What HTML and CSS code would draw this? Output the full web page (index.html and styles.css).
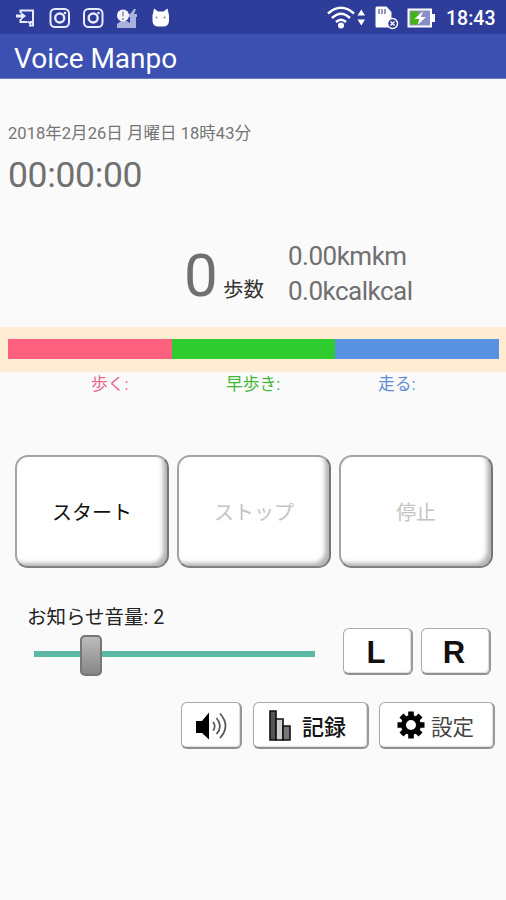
FILE: index.html
```html
<!DOCTYPE html>
<html lang="ja">
<head>
<meta charset="utf-8">
<title>Voice Manpo</title>
<link rel="stylesheet" href="styles.css">
</head>
<body>
<div class="screen">
  <header class="status">
    <svg class="status-left" width="180" height="34" viewBox="0 0 180 34">
      <g fill="none" stroke="#e8ebff" stroke-width="2">
        <path d="M20.500 13V10.500H33V22h-3M20.500 19v3h7"/>
        <path d="M16 16h6" stroke-width="3"/>
        <path d="M28 21.500l3 2.500M33 21v4.500h-4" stroke-width="2"/>
        <rect x="50.500" y="9" width="18.500" height="18" rx="4.500"/>
        <circle cx="59.700" cy="18" r="4.500" stroke-width="2.400"/>
        <rect x="84" y="9" width="18.500" height="18" rx="4.500"/>
        <circle cx="93.200" cy="18" r="4.500" stroke-width="2.400"/>
      </g>
      <path d="M21 12l5 4-5 4z" fill="#e8ebff"/>
      <g fill="#e8ebff"><circle cx="65" cy="13" r="1.300"/><circle cx="98.500" cy="13" r="1.300"/></g>
      <path d="M117 28v-4l4-3h6l3 2v-6h-2v-3h2l4-5h2l-2 5h3v3h-1v11z" fill="#a9b2dc"/>
      <circle cx="123" cy="15.500" r="6" fill="#f4f5ff"/>
      <path d="M123 11.500v5M123 18v2" stroke="#9aa0be" stroke-width="1.800"/>
      <path d="M152.500 15.500L154 8.500l4 3h5.500l4-3 1.500 7v5q0 6-6 6h-4.500q-6 0-6-6z" fill="#fff"/>
      <circle cx="156.500" cy="17.500" r="1" fill="#7780b8"/><circle cx="164.500" cy="17.500" r="1" fill="#7780b8"/>
    </svg>
    <div class="status-right">
      <svg width="112" height="34" viewBox="326 0 112 34">
        <g fill="none" stroke="#fff" stroke-width="2.600">
          <path d="M328 13.500Q341 2 354 13.500"/>
          <path d="M332 18Q341 9.500 350 18"/>
          <path d="M336 22Q341 17.500 346 22"/>
        </g>
        <circle cx="341" cy="25.500" r="3" fill="#fff"/>
        <path d="M357.500 15.500h7.500l-3.700-6zM357.500 19.500h7.500l-3.700 6z" fill="#fff"/>
        <path d="M375.500 8q0-1.500 1.500-1.500h9.500l5 5.500v15.500H377q-1.500 0-1.500-1.500z" fill="#fff"/>
        <path d="M379 9v5M382 9v5M385 9v5" stroke="#71799e" stroke-width="1.500"/>
        <circle cx="392.500" cy="23.500" r="5" fill="#2b3a92" stroke="#fff" stroke-width="1.500"/>
        <path d="M390.500 21.500l4 4m0-4l-4 4" stroke="#fff" stroke-width="1.500"/>
        <rect x="408.500" y="9.500" width="22.500" height="17" fill="#8790c4" stroke="#fff" stroke-width="2"/>
        <path d="M410.500 11.500h8v13h-8z" fill="#45b515"/>
        <path d="M432 14h3v8h-3z" fill="#fff"/>
        <path d="M423 11l-8.500 8h5l-2 6 8.500-8h-5z" fill="#fff"/>
      </svg>
      <span class="clock">18:43</span>
    </div>
  </header>
  <div class="appbar"><h1>Voice Manpo</h1></div>

  <main>
    <div class="date">2018年2月26日 月曜日 18時43分</div>
    <div class="timer">00:00:00</div>
    <section class="stats">
      <span class="count">0</span>
      <span class="unit">歩数</span>
      <div class="measures"><div>0.00kmkm</div><div>0.0kcalkcal</div></div>
    </section>
    <div class="band"><i class="walk"></i><i class="brisk"></i><i class="run"></i></div>
    <div class="legend"><span class="t-walk">歩く:</span><span class="t-brisk">早歩き:</span><span class="t-run">走る:</span></div>
    <div class="controls">
      <button class="big">スタート</button>
      <button class="big" disabled>ストップ</button>
      <button class="big" disabled>停止</button>
    </div>
    <section class="volume">
      <div class="volume-main">
        <div class="volume-label">お知らせ音量: 2</div>
        <div class="slider"><div class="thumb"></div></div>
      </div>
      <button class="small side">L</button>
      <button class="small side">R</button>
    </section>
    <div class="tools">
      <button class="small sound" aria-label="音声">
        <svg width="32" height="30" viewBox="0 0 32 30">
          <path d="M1 10h6l7-8.500v27L7 22H1z" fill="#000"/>
          <g fill="none" stroke="#555" stroke-width="1.700"><path d="M18 11q3.500 4.500 0 8.500"/><path d="M21.500 7q7 8.500 0 16"/><path d="M25 2.500q11 12.500 0 24.500"/></g>
        </svg>
      </button>
      <button class="small log">
        <svg width="23" height="31" viewBox="0 0 23 31">
          <g stroke="#111" stroke-width="1.600"><path d="M1 1h6v29H1z" fill="#555"/><path d="M7 9h7v21H7z" fill="#ccc"/><path d="M14 16h7v14h-7z" fill="#777"/></g>
        </svg>
        <span>記録</span>
      </button>
      <button class="small config">
        <svg width="28" height="28" viewBox="-14 -14 28 28">
          <circle r="7.500" fill="none" stroke="#000" stroke-width="5"/>
          <g fill="#000"><path id="teeth" d="M-2.800-13.500h5.600v5h-5.600zM-2.800 8.500h5.600v5h-5.600zM-13.500-2.800h5v5.600h-5zM8.500-2.800h5v5.600h-5z"/><use href="#teeth" transform="rotate(45)"/></g>
        </svg>
        <span>設定</span>
      </button>
    </div>
  </main>
</div>
</body>
</html>
```
FILE: styles.css
```css
* { box-sizing: border-box; }
body { margin: 0; background: #fafafa; font-family: Roboto, "Noto Sans CJK JP", sans-serif; }
.screen { width: 506px; height: 900px; overflow: hidden; background: #fafafa; }
.status { display: flex; justify-content: space-between; height: 34px; background: #2d3d99; }
.status svg { display: block; }
.status-right { display: flex; width: 180px; }
.clock { margin-left: 8px; color: #fff; font-size: 19.500px; font-weight: 500; line-height: 38px; white-space: nowrap; }
.appbar { height: 45px; padding-left: 14px; background: #3c50b2; border-bottom: 1px solid #6c7bc0; }
h1 { margin: 0; color: #fff; font-size: 28px; font-weight: 400; line-height: 50px; white-space: nowrap; }
main { display: flex; flex-direction: column; }
.date { height: 24px; margin: 43px 0 0 8px; color: #757575; font-size: 16.500px; line-height: 24px; letter-spacing: 0.040px; white-space: nowrap; }
.timer { height: 40px; margin: 9px 0 0 8px; color: #707070; font-size: 35.500px; line-height: 40px; letter-spacing: -0.350px; }
.stats { display: flex; height: 80px; margin: 44px 0 0 184px; color: #707070; }
.count { width: 39px; font-size: 60px; line-height: 73px; }
.unit { width: 65px; padding-top: 36px; color: #333; font-size: 20.500px; line-height: 30px; }
.measures { font-size: 26px; line-height: 34.500px; letter-spacing: -0.500px; white-space: nowrap; }
.band { display: grid; grid-template-columns: repeat(3, 1fr); height: 45px; margin-top: 8px; padding: 12px 7px 13px 8px; background: #ffedd3; }
.walk { background: #fb607f; }
.brisk { background: #2ecc2e; }
.run { background: #5892e0; }
.legend { display: flex; height: 24px; font-size: 16.800px; line-height: 25px; }
.t-walk { width: 135px; margin-left: 91px; color: #e9668b; }
.t-brisk { width: 152px; color: #42b735; }
.t-run { color: #5f8cd4; }
button { display: flex; align-items: center; justify-content: center; margin: 0; padding: 0; font-family: inherit; color: #111; background: #fff; }
.controls { display: grid; grid-template-columns: repeat(3, 154px); gap: 8px; margin: 59px 0 0 15px; }
.big { height: 113px; border: 2px solid #a4a4a4; border-right-color: #757575; border-bottom-color: #808080; border-radius: 13px; box-shadow: inset -5px -4px 4px -1px #b4b4b4; font-size: 20px; }
.big:disabled { color: #c4c4c4; }
.volume { display: flex; height: 80px; margin-top: 34px; }
.volume-main { width: 343px; padding-left: 27px; }
.volume-label { height: 30px; color: #222; font-size: 19.500px; line-height: 32px; }
.slider { width: 281px; height: 6px; margin: 19px 0 0 7px; padding-left: 46px; background: #5ab8a5; }
.thumb { width: 22px; height: 41px; transform: translateY(-16px); border: 2px solid #777; border-radius: 5px; background: linear-gradient(#bcbcbc, #868686); }
.small { border: 1.500px solid #aaa; border-bottom: 2px solid #909090; border-right: 2px solid #999; border-radius: 6px; box-shadow: inset -1px -1px 1px #ddd; }
.side { width: 70px; height: 47px; margin: 26px 8px 0 0; padding: 4px 3px 0 0; font-family: "Liberation Sans", sans-serif; font-size: 31px; font-weight: 700; }
.tools { display: flex; margin: 20px 0 0 181px; }
.small svg { display: block; flex: none; }
.sound { width: 61px; height: 47px; margin-right: 11px; padding-top: 2px; }
.log { width: 116px; height: 47px; gap: 10px; margin-right: 10px; padding-right: 6px; font-size: 22px; font-weight: 500; }
.config { width: 116px; height: 47px; gap: 6px; padding-right: 2px; font-size: 21.500px; color: #444; }
```
